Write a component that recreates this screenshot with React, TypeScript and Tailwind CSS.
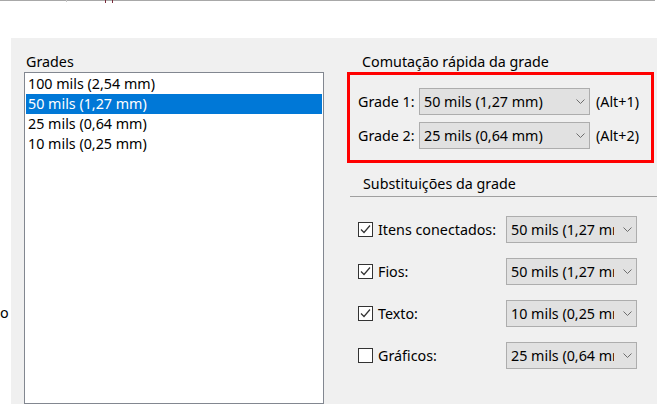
import React from 'react';

const Chevron = () => (
  <svg width="9" height="5" viewBox="0 0 9 5" className="shrink-0">
    <path d="M0.5 0.5 L4.5 4.5 L8.5 0.5" fill="none" stroke="#6d6d6d" strokeWidth="1" />
  </svg>
);

interface ComboProps {
  value: string;
  width: string;
  textWidth: string;
}

function Combo({ value, width, textWidth }: ComboProps) {
  return (
    <div className={`${width} h-[27px] bg-[#e1e1e1] border border-[#adadad] flex items-center`}>
      <div className={`${textWidth} pl-[4px] overflow-hidden whitespace-nowrap leading-[20px]`}>{value}</div>
      <div className="flex-1 flex justify-end pr-[4px]">
        <Chevron />
      </div>
    </div>
  );
}

function CheckBox({ checked }: { checked: boolean }) {
  return (
    <div className="w-[15px] h-[15px] border border-[#333333] bg-white flex items-center justify-center shrink-0">
      {checked && (
        <svg width="13" height="13" viewBox="0 0 13 13">
          <path d="M2 6.5 L5 9.5 L11 2.5" fill="none" stroke="#333333" strokeWidth="1.2" />
        </svg>
      )}
    </div>
  );
}

const grades = ['100 mils (2,54 mm)', '50 mils (1,27 mm)', '25 mils (0,64 mm)', '10 mils (0,25 mm)'];

const overrides = [
  { label: 'Itens conectados:', checked: true, value: '50 mils (1,27 mm)' },
  { label: 'Fios:', checked: true, value: '50 mils (1,27 mm)' },
  { label: 'Texto:', checked: true, value: '10 mils (0,25 mm)' },
  { label: 'Gráficos:', checked: false, value: '25 mils (0,64 mm)' },
];

export default function App() {
  return (
    <div className="w-[660px] h-[404px] bg-white overflow-hidden relative font-['Noto_Sans',sans-serif] text-[14.3px] text-black">
      <div className="h-px w-[655px] bg-[#a8a8a8]" />
      <span className="absolute left-[66px] top-0 w-px h-[2px] bg-[#c8c8c8]" />
      <span className="absolute left-[105px] top-0 w-px h-[3px] bg-[#7a2a3a]" />
      <span className="absolute left-[112px] top-0 w-px h-[3px] bg-[#7a2a3a]" />

      <div className="flex mt-[37px] h-[366px]">
        <div className="w-[11px] pt-[265px] leading-[20px] overflow-hidden">o</div>

        <div className="w-[646px] bg-[#f0f0f0] flex">
          <div className="ml-[13px] w-[300px] flex flex-col">
            <div className="h-[34px] pt-[14px] pl-[2px] leading-[20px]">Grades</div>
            <div className="flex-1 border border-[#828790] bg-white p-px">
              {grades.map((g, i) => (
                <div
                  key={g}
                  className={`h-[20px] px-[2px] leading-[20px] whitespace-nowrap ${
                    i === 1 ? 'bg-[#0078d7] text-white' : ''
                  }`}
                >
                  {g}
                </div>
              ))}
            </div>
          </div>

          <div className="ml-[23px] w-[307px] flex flex-col">
            <div className="h-[34px] pt-[14px] pl-[15px] leading-[20px]">Comutação rápida da grade</div>
            <div className="h-[91px] border-[3px] border-[#ff0000] pt-[13px] pl-[8px] flex flex-col gap-[7px]">
              {[
                ['Grade 1:', '50 mils (1,27 mm)', '(Alt+1)'],
                ['Grade 2:', '25 mils (0,64 mm)', '(Alt+2)'],
              ].map(([label, value, key]) => (
                <div key={label} className="flex items-center">
                  <div className="w-[61px] leading-[20px]">{label}</div>
                  <Combo value={value} width="w-[171px]" textWidth="w-[150px]" />
                  <div className="ml-[6px] leading-[20px]">{key}</div>
                </div>
              ))}
            </div>

            <div className="mt-[11px] pl-[16px] leading-[20px]">Substituições da grade</div>
            <div className="mt-[2px] ml-[3px] w-[307px] h-px bg-[#a0a0a0]" />

            <div className="mt-[19px] flex flex-col gap-[15px]">
              {overrides.map((o) => (
                <div key={o.label} className="flex items-center h-[27px]">
                  <div className="ml-[11px] w-[148px] flex items-center gap-[5px]">
                    <CheckBox checked={o.checked} />
                    <span className="leading-[20px]">{o.label}</span>
                  </div>
                  <Combo value={o.value} width="w-[131px]" textWidth="w-[107px]" />
                </div>
              ))}
            </div>
          </div>
        </div>
      </div>
    </div>
  );
}
